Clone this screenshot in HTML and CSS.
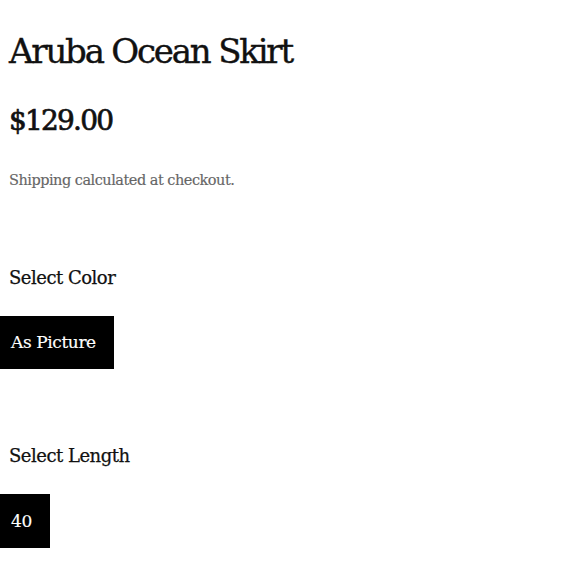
FILE: index.html
```html
<!DOCTYPE html>
<html>
<head>
<meta charset="utf-8">
<link rel="stylesheet" href="styles.css">
</head>
<body>
<main class="product">
  <h1 class="title">Aruba Ocean Skirt</h1>
  <div class="price">$129.00</div>
  <p class="shipping">Shipping calculated at checkout.</p>
  <section class="option">
    <h2 class="option-label">Select Color</h2>
    <div class="swatches"><span class="swatch">As Picture</span></div>
  </section>
  <section class="option">
    <h2 class="option-label">Select Length</h2>
    <div class="swatches"><span class="swatch">40</span></div>
  </section>
</main>
</body>
</html>
```
FILE: styles.css
```css
html, body { margin: 0; padding: 0; background: #fff; }
body { font-family: "DejaVu Serif", serif; color: #111; }
.product { display: flex; flex-direction: column; align-items: flex-start; }
.title { margin: 29px 0 0 9px; font-size: 34px; font-weight: normal; line-height: 44px; letter-spacing: -2.2px; -webkit-text-stroke: 0.4px #111; }
.price { margin: 28px 0 0 9px; font-size: 28px; line-height: 40px; letter-spacing: -1.8px; -webkit-text-stroke: 0.7px #111; }
.shipping { margin: 27px 0 0 9px; font-size: 14.5px; line-height: 24px; letter-spacing: -0.5px; color: #666; -webkit-text-stroke: 0.15px #666; }
.option { margin-top: 72px; }
.option + .option { margin-top: 73px; }
.option-label { margin: 0 0 0 9px; font-size: 18px; font-weight: normal; line-height: 28px; letter-spacing: -0.5px; -webkit-text-stroke: 0.25px #111; }
.swatches { display: flex; margin-top: 24px; }
.swatch { background: #000; color: #fff; font-size: 17px; line-height: 53px; padding: 0 18px 0 11px; letter-spacing: -0.4px; -webkit-text-stroke: 0.15px #fff; }
.option + .option .swatch { line-height: 54px; }
```
